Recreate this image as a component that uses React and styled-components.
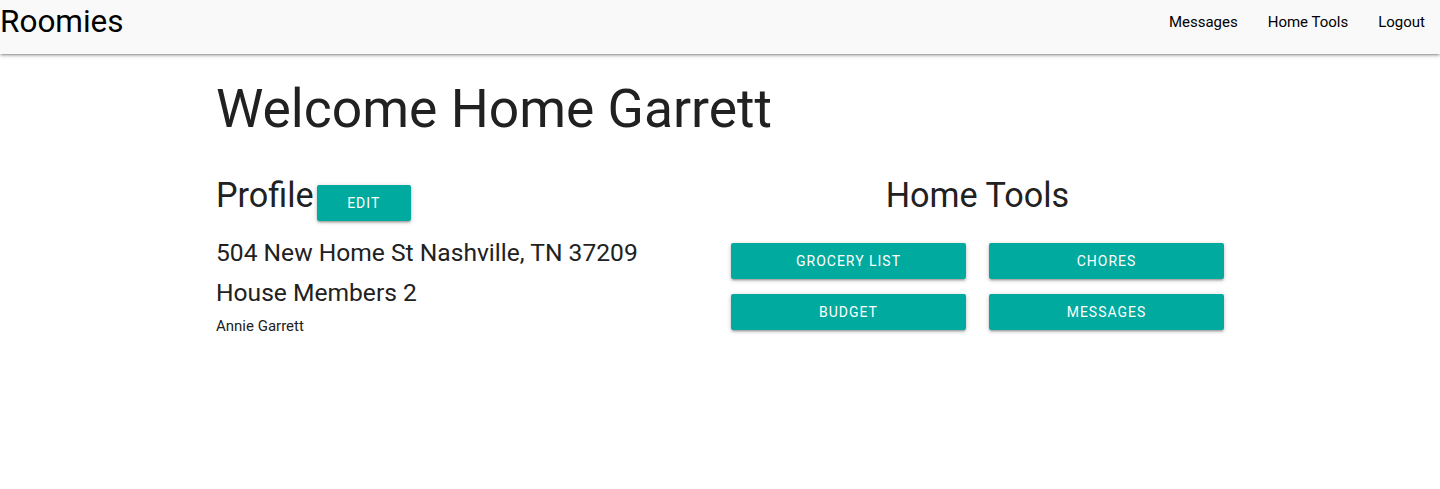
import React from 'react';
import styled, { createGlobalStyle } from 'styled-components';

const GlobalStyle = createGlobalStyle`
  html, body {
    margin: 0;
    padding: 0;
    background: #ffffff;
    font-family: Roboto, "Noto Sans", sans-serif;
    color: rgba(0, 0, 0, 0.87);
    font-size: 15px;
  }
  * { box-sizing: border-box; }
`;

const Nav = styled.nav`
  height: 54px;
  background: #f9f9f9;
  display: flex;
  justify-content: space-between;
  align-items: flex-start;
  box-shadow: 0 2px 2px 0 rgba(0, 0, 0, 0.14), 0 3px 1px -2px rgba(0, 0, 0, 0.12),
    0 1px 5px 0 rgba(0, 0, 0, 0.2);
`;

const Brand = styled.a`
  font-size: 31.5px;
  line-height: 44px;
  color: #000;
  text-decoration: none;
`;

const NavLinks = styled.ul`
  display: flex;
  list-style: none;
  margin: 0;
  padding: 0;
`;

const NavLink = styled.a`
  display: block;
  padding: 0 15px;
  font-size: 15px;
  line-height: 44px;
  color: #000;
  text-decoration: none;
`;

const Container = styled.main`
  width: 1008px;
  margin: 0 auto;
`;

const Title = styled.h1`
  margin: 26px 0 0;
  font-size: 53.4px;
  font-weight: 400;
  line-height: 1.1;
  color: #212121;
`;

const Columns = styled.div`
  display: grid;
  grid-template-columns: 504px 504px;
  margin-top: 38px;
`;

const Column = styled.section`
  padding-left: ${(p) => p.$inset || 0}px;
`;

const HeadingRow = styled.div`
  display: flex;
  align-items: flex-start;
  justify-content: ${(p) => (p.$center ? 'center' : 'flex-start')};
`;

const Heading = styled.h4`
  margin: 0;
  font-size: 34.2px;
  font-weight: 400;
  line-height: 1.1;
  color: #212121;
`;

const Button = styled.button`
  height: 36px;
  padding: 0 16px;
  border: none;
  border-radius: 2px;
  background: #00aa9e;
  color: #fff;
  font-family: Roboto, sans-serif;
  font-size: 14px;
  letter-spacing: 1px;
  text-transform: uppercase;
  cursor: pointer;
  box-shadow: 0 2px 2px 0 rgba(0, 0, 0, 0.14), 0 3px 1px -2px rgba(0, 0, 0, 0.12),
    0 1px 5px 0 rgba(0, 0, 0, 0.2);
`;

const EditButton = styled(Button)`
  width: 94px;
  margin: 8px 0 0 3px;
`;

const Detail = styled.h5`
  margin: ${(p) => p.$top}px 0 0;
  font-size: 24.6px;
  font-weight: 400;
  line-height: 1.1;
  color: #212121;
`;

const Member = styled.p`
  margin: 9px 0 0;
  font-size: 15px;
  line-height: 22px;
  color: #212121;
`;

const ToolGrid = styled.div`
  display: grid;
  grid-template-columns: 235px 235px;
  column-gap: 23px;
  row-gap: 15px;
  margin-top: 29px;
`;

const tools = ['Grocery List', 'Chores', 'Budget', 'Messages'];

export default function App() {
  return (
    <>
      <GlobalStyle />
      <Nav>
        <Brand href="#">Roomies</Brand>
        <NavLinks>
          <li><NavLink href="#">Messages</NavLink></li>
          <li><NavLink href="#">Home Tools</NavLink></li>
          <li><NavLink href="#">Logout</NavLink></li>
        </NavLinks>
      </Nav>
      <Container>
        <Title>Welcome Home Garrett</Title>
        <Columns>
          <Column>
            <HeadingRow>
              <Heading>Profile</Heading>
              <EditButton>Edit</EditButton>
            </HeadingRow>
            <Detail $top={18}>504 New Home St Nashville, TN 37209</Detail>
            <Detail $top={13}>House Members 2</Detail>
            <Member>Annie Garrett</Member>
          </Column>
          <Column $inset={11}>
            <HeadingRow $center>
              <Heading>Home Tools</Heading>
            </HeadingRow>
            <ToolGrid>
              {tools.map((t) => (
                <Button key={t}>{t}</Button>
              ))}
            </ToolGrid>
          </Column>
        </Columns>
      </Container>
    </>
  );
}
